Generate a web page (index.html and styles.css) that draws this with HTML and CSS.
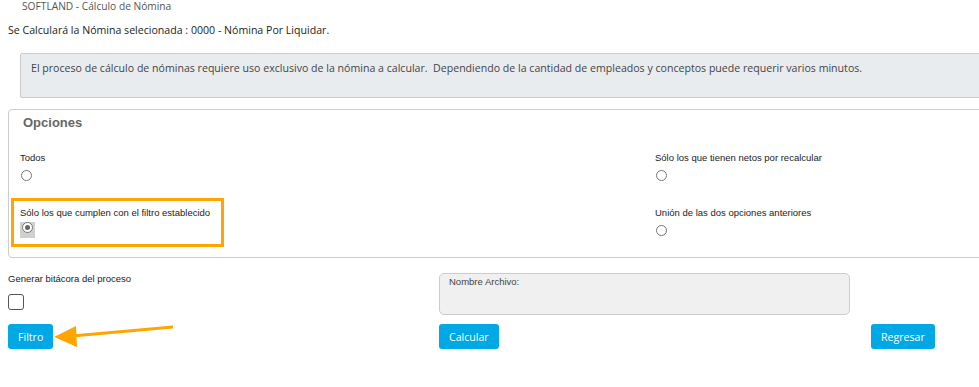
FILE: index.html
```html
<!DOCTYPE html>
<html lang="es">
<head>
    <meta charset="UTF-8">
    <meta name="viewport" content="width=device-width, initial-scale=1.0">
    <title>SOFTLAND - Cálculo de Nómina</title>
    <link rel="stylesheet" href="styles.css">
</head>
<body>
    <div class="page">
        <div class="title">SOFTLAND - Cálculo de Nómina</div>
        <div class="nomina">Se Calculará la Nómina selecionada : 0000 - Nómina Por Liquidar.</div>

        <div class="info">
            El proceso de cálculo de nóminas requiere uso exclusivo de la nómina a calcular.&nbsp; Dependiendo de la cantidad de empleados y conceptos puede requerir varios minutos.
        </div>

        <div class="options">
            <div class="options-title">Opciones</div>
            <div class="options-grid">
                <div class="option">
                    <div class="option-label">Todos</div>
                    <span class="radio"></span>
                </div>
                <div class="option">
                    <div class="option-label">Sólo los que tienen netos por recalcular</div>
                    <span class="radio"></span>
                </div>
                <div class="option option-marked">
                    <div class="option-label">Sólo los que cumplen con el filtro establecido</div>
                    <span class="radio-wrap"><span class="radio checked"></span></span>
                </div>
                <div class="option">
                    <div class="option-label">Unión de las dos opciones anteriores</div>
                    <span class="radio"></span>
                </div>
            </div>
        </div>

        <div class="bottom">
            <div class="log">
                <div class="option-label">Generar bitácora del proceso</div>
                <span class="checkbox"></span>
            </div>
            <div class="file-box">Nombre Archivo:</div>
            <div></div>

            <div><button class="btn">Filtro</button></div>
            <div><button class="btn">Calcular</button></div>
            <div><button class="btn">Regresar</button></div>
        </div>

        <svg class="arrow" width="130" height="30" viewBox="0 0 130 30">
            <line x1="119" y1="5" x2="18" y2="14" stroke="#ffa500" stroke-width="3"/>
            <polygon points="0,15 22,4 23,25" fill="#ffa500"/>
        </svg>
    </div>
</body>
</html>
```

FILE: styles.css
```css
body {
    margin: 0;
    background-color: white;
    font-family: 'Open Sans', sans-serif;
    color: #222;
    overflow: hidden;
}

.page {
    position: relative;
    padding: 0 0 0 8px;
}

.title {
    padding-left: 14px;
    font-size: 10.2px;
    line-height: 13px;
    color: #555;
}

.nomina {
    margin-top: 10px;
    font-size: 10.6px;
    line-height: 14px;
    color: #222;
}

.info {
    margin: 16px -30px 0 12px;
    height: 43px;
    padding: 0 10px;
    border: 1px solid #ccc;
    border-radius: 2px;
    background-color: #e9ecef;
    font-size: 10.6px;
    line-height: 28px;
    color: #444;
}

.options {
    margin: 11px -30px 0 0;
    height: 147px;
    border: 1px solid #ccc;
    border-radius: 4px;
}

.options-title {
    padding: 5px 14px 0;
    font-family: 'Liberation Sans', Arial, sans-serif;
    font-weight: bold;
    font-size: 13px;
    line-height: 16px;
    color: #666;
}

.options-grid {
    display: grid;
    grid-template-columns: 635px 1fr;
    margin-top: 21px;
}

.option {
    height: 55px;
    padding-left: 11px;
}

.option-marked {
    margin: -9px 0 0 2px;
    padding: 6px 0 0 6px;
    width: 201px;
    height: 37px;
    border: 3px solid #ffa500;
}

.option-label {
    font-family: 'Liberation Sans', Arial, sans-serif;
    font-size: 9.5px;
    line-height: 12px;
    color: #222;
}

.radio {
    display: block;
    width: 9px;
    height: 9px;
    margin: 6px 0 0 1px;
    border: 1px solid #777;
    border-radius: 50%;
    background-color: white;
    position: relative;
}

.radio-wrap {
    display: block;
    width: 15px;
    height: 16px;
    margin-top: 3px;
    background-color: #d0d0d0;
}

.radio-wrap .radio {
    margin: 3px 0 0 2px;
}

.radio.checked::after {
    content: "";
    position: absolute;
    left: 2px;
    top: 2px;
    width: 5px;
    height: 5px;
    border-radius: 50%;
    background-color: #666;
}

.bottom {
    display: grid;
    grid-template-columns: 431px 432px auto;
    margin-top: 15px;
}

.checkbox {
    display: block;
    width: 14px;
    height: 14px;
    margin-top: 9px;
    border: 1px solid #555;
    border-radius: 3px;
}

.file-box {
    width: 400px;
    height: 39px;
    padding: 1px 0 0 9px;
    box-sizing: content-box;
    border: 1px solid #ccc;
    border-radius: 5px;
    background-color: #f0f0f0;
    font-family: 'Liberation Sans', Arial, sans-serif;
    font-size: 9.5px;
    line-height: 13px;
    color: #444;
}

.btn {
    margin-top: 9px;
    height: 25px;
    padding: 0 10px;
    background-color: #00a8e6;
    color: white;
    border: none;
    border-radius: 3px;
    font-family: 'Open Sans', sans-serif;
    font-size: 10.6px;
    cursor: pointer;
}

.arrow {
    position: absolute;
    left: 54px;
    top: 322px;
}
```
